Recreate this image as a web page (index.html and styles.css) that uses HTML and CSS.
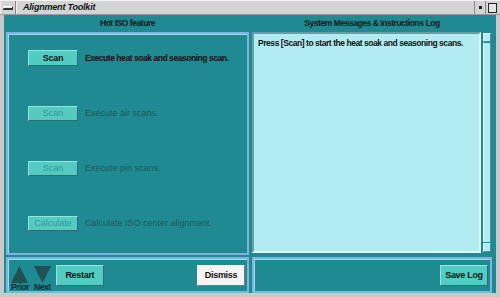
FILE: index.html
```html
<!DOCTYPE html>
<html>
<head>
<meta charset="utf-8">
<link rel="stylesheet" href="styles.css">
</head>
<body>
<div class="window">
  <div class="titlebar">
    <div class="menu-btn"><span></span></div>
    <div class="title">Alignment Toolkit</div>
    <div class="tb-right">
      <div class="min-btn"><span></span></div>
      <div class="max-btn"><span></span></div>
    </div>
  </div>
  <div class="main">
    <div class="col left">
      <div class="header">Hot ISO feature</div>
      <div class="panel steps">
        <div class="step">
          <button class="btn">Scan</button>
          <span class="desc">Execute heat soak and seasoning scan.</span>
        </div>
        <div class="step disabled">
          <button class="btn">Scan</button>
          <span class="desc">Execute air scans.</span>
        </div>
        <div class="step disabled">
          <button class="btn">Scan</button>
          <span class="desc">Execute pin scans.</span>
        </div>
        <div class="step disabled">
          <button class="btn">Calculate</button>
          <span class="desc">Calculate ISO center alignment.</span>
        </div>
      </div>
    </div>
    <div class="col right">
      <div class="header">System Messages &amp; Instructions Log</div>
      <div class="log-wrap">
        <div class="log">Press [Scan] to start the heat soak and seasoning scans.</div>
        <div class="scrollbar">
          <div class="arrow up"></div>
          <div class="track"></div>
          <div class="arrow down"></div>
        </div>
      </div>
    </div>
    <div class="panel bottom left-bottom">
      <div class="nav">
        <div class="nav-item">
          <svg width="17" height="17" viewBox="0 0 17 17"><polygon points="8.5,0 17,17 0,17" fill="#1f5254"/></svg>
          <span>Prior</span>
        </div>
        <div class="nav-item">
          <svg width="17" height="17" viewBox="0 0 17 17"><polygon points="0,0 17,0 8.5,17" fill="#1f5254"/></svg>
          <span>Next</span>
        </div>
      </div>
      <button class="btn big">Restart</button>
      <div class="spacer"></div>
      <button class="btn big white">Dismiss</button>
    </div>
    <div class="panel bottom right-bottom">
      <div class="spacer"></div>
      <button class="btn big">Save Log</button>
    </div>
  </div>
</div>
</body>
</html>
```
FILE: styles.css
```css
* { box-sizing: border-box; }
html, body { margin: 0; padding: 0; }
body {
  width: 500px;
  height: 297px;
  background: #c9c9c9;
  font-family: "Liberation Sans", Arial, sans-serif;
  overflow: hidden;
}
.window {
  width: 500px;
  height: 297px;
  display: flex;
  flex-direction: column;
}
.titlebar {
  height: 15px;
  display: flex;
  align-items: stretch;
  background: #d4d4d4;
  border-top: 1px solid #f4f4f4;
  border-bottom: 1px solid #9a9a9a;
}
.menu-btn {
  width: 16px;
  border-right: 1px solid #888;
  border-left: 1px solid #f0f0f0;
  display: flex;
  align-items: center;
  justify-content: center;
}
.menu-btn span {
  width: 10px;
  height: 3px;
  background: #e8e8e8;
  border: 1px solid #333;
  border-top-color: #fff;
  border-left-color: #fff;
  box-shadow: 0 1px 0 #333;
}
.title {
  flex: 1;
  padding-left: 6px;
  font-size: 9px;
  font-weight: bold;
  font-style: italic;
  line-height: 13px;
  color: #111;
  border-left: 1px solid #f0f0f0;
  letter-spacing: -0.2px;
}
.tb-right { display: flex; }
.min-btn, .max-btn {
  width: 11px;
  border-left: 1px solid #888;
  display: flex;
  align-items: center;
  justify-content: center;
}
.min-btn span {
  width: 3px; height: 3px; background: #222;
}
.max-btn span {
  width: 9px; height: 10px; border: 1px solid #222; background: #e4e4e4;
}
.max-btn { width: 13px; margin-right: 2px; }
.main {
  flex: 0 0 auto;
  height: 278px;
  margin: 0 4px;
  background: #1f8a91;
  padding: 0 3px 1px 2px;
  display: grid;
  grid-template-columns: 243px 240px;
  grid-template-rows: 240px 36px;
  column-gap: 3px;
  row-gap: 2px;
}
.col { display: flex; flex-direction: column; }
.header {
  height: 17px;
  font-size: 8.5px;
  letter-spacing: -0.45px;
  font-weight: bold;
  color: #101818;
  text-align: center;
  line-height: 17px;
}
.panel {
  border: 2px solid #7fb4de;
  box-shadow: inset 1px 1px 0 #a9d4f0;
}
.steps {
  flex: 1;
  padding: 16px 0 0 20px;
  display: flex;
  flex-direction: column;
  gap: 39px;
}
.step {
  display: flex;
  align-items: center;
  height: 16px;
}
.btn {
  font-family: "Liberation Sans", Arial, sans-serif;
  font-size: 9px;
  letter-spacing: -0.3px;
  font-weight: bold;
  color: #111;
  background: #52cbc2;
  border: 1px solid #2c6e6c;
  border-top-color: #8ee6de;
  border-left-color: #8ee6de;
  padding: 0;
  margin: 0;
  width: 50px;
  height: 16px;
  line-height: 13px;
}
.desc {
  margin-left: 7px;
  font-size: 8.5px;
  letter-spacing: -0.45px;
  font-weight: bold;
  color: #111;
}
.disabled .btn {
  color: #2e9d98;
  font-weight: normal;
  font-size: 9px;
  letter-spacing: 0;
  height: 15px;
  background: #56c9c1;
}
.disabled .desc {
  color: #1f5a5e;
  font-weight: normal;
  font-size: 9px;
  letter-spacing: 0;
}
.log-wrap {
  flex: 1;
  display: flex;
  margin-bottom: 2px;
}
.log {
  flex: 1;
  background: #b2ecf2;
  border: 2px solid #e6fbfd;
  border-top-color: #6a9ea6;
  border-left-color: #6a9ea6;
  padding: 4px 4px;
  font-size: 8.5px;
  letter-spacing: -0.45px;
  font-weight: bold;
  color: #111;
  line-height: 11px;
}
.scrollbar {
  width: 11px;
  background: #1f8a91;
  display: flex;
  flex-direction: column;
  padding: 1px 1px 1px 2px;
}
.arrow {
  height: 9px;
  background: #b2ecf2;
  border: 1px solid #e6fbfd;
  border-right-color: #5a8a90;
  border-bottom-color: #5a8a90;
}
.track {
  flex: 1;
  background: #b2ecf2;
  border-left: 1px solid #e6fbfd;
  border-right: 1px solid #5a8a90;
  margin: 1px 0;
}
.bottom {
  display: flex;
  align-items: center;
  padding: 0 2px 0 2px;
}
.nav { display: flex; gap: 5px; margin-right: 5px; margin-top: 6px; margin-left: 1px; }
.nav-item {
  display: flex;
  flex-direction: column;
  align-items: center;
  font-size: 8.5px;
  letter-spacing: -0.4px;
  font-weight: bold;
  color: #0e2a2a;
  line-height: 8px;
}
.nav-item svg { display: block; margin-bottom: 0; }
.btn.big {
  width: 48px;
  height: 21px;
  margin-top: 1px;
}
.btn.white {
  background: #f4f4f4;
  border-top-color: #ffffff;
  border-left-color: #ffffff;
  border-right-color: #777;
  border-bottom-color: #777;
}
.spacer { flex: 1; }
.right-bottom { padding-right: 2px; }
```
